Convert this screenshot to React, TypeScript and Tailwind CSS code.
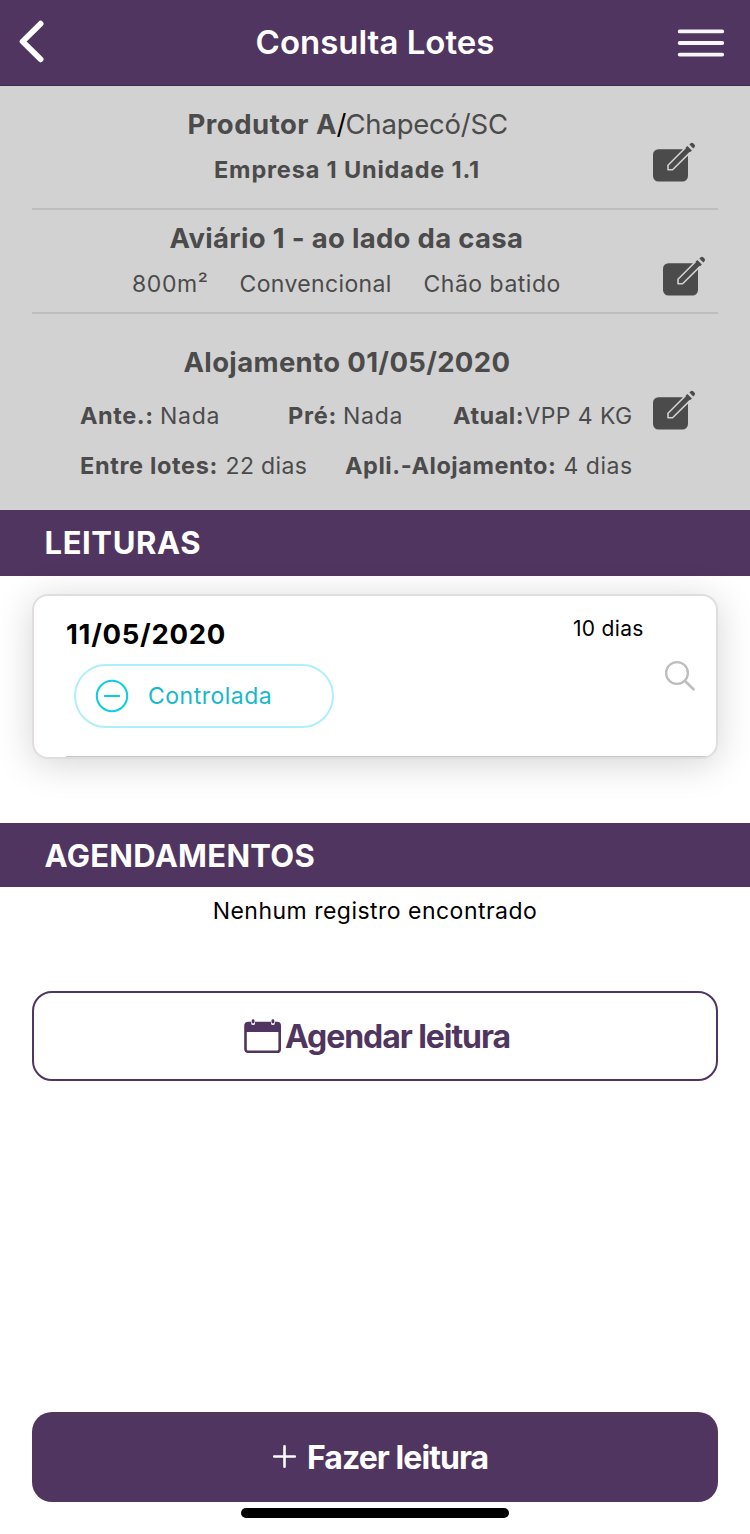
import type { ReactNode } from 'react';

function EditIcon() {
  return (
    <svg className="block h-[40px] w-[44px] shrink-0" viewBox="0 0 44 40">
      <rect x="0" y="7.2" width="35" height="32.4" rx="5.5" fill="#4b4b4b" />
      <path
        d="M15 27.7V23.2L34.2 4L38.9 8.6L19.6 27.7Z"
        fill="#4b4b4b"
        stroke="#d2d2d2"
        strokeWidth="1.6"
        strokeLinejoin="round"
      />
      <path d="M34.4 3.9L38.9 8.4L37 10.3L32.5 5.8Z" fill="#4b4b4b" />
      <path d="M36.4 2.6L37.7 1.3Q39 .1 40.2 1.3L41.6 2.7Q42.7 3.9 41.6 5.1L40.3 6.4Z" fill="#4b4b4b" />
    </svg>
  );
}

function SectionTitle({ children }: { children: ReactNode }) {
  return <h3 className="text-[27.5px] font-bold leading-[34px]">{children}</h3>;
}

function Header() {
  return (
    <header className="grid h-[86px] grid-cols-[80px_1fr_80px] items-start border-b border-[#3f2a4c] bg-[#4f355f] text-white">
      <svg className="mt-[17px] ml-[16px] h-[50px] w-[32px]" viewBox="0 0 32 50" fill="none">
        <path
          d="M24.6 6.7L6.6 24.5L24.6 42.3"
          stroke="#fff"
          strokeWidth="5.8"
          strokeLinecap="round"
          strokeLinejoin="round"
        />
      </svg>
      <h1 className="mt-[22px] text-center text-[33px] font-semibold leading-[40px]">Consulta Lotes</h1>
      <svg className="mt-[26px] ml-[7px] h-[34px] w-[48px]" viewBox="0 0 48 34" fill="none">
        <path d="M2.7 5.4H45.2M2.7 17H45.2M2.7 28.6H45.2" stroke="#f8f6f9" strokeWidth="3.9" strokeLinecap="round" />
      </svg>
    </header>
  );
}

function Details() {
  return (
    <section className="h-[424px] bg-[#d2d2d2] px-[32px] text-[#4b4b4b]">
      <div className="flex h-[124px] border-b-2 border-[#bebebe]">
        <div className="w-[621px] pt-[21px]">
          <div className="flex pl-[155.5px] text-[27.5px] leading-[34px] whitespace-nowrap">
            <span className="w-[149px] font-bold tracking-[0.5px]">Produtor A</span>
            <span className="w-[9px] text-black">/</span>
            <span className="tracking-[-0.22px]">Chapecó/SC</span>
          </div>
          <p className="mt-[13px] pl-[182px] text-[23.5px] font-bold leading-[32px] tracking-[0.83px]">
            Empresa 1 Unidade 1.1
          </p>
        </div>
        <div className="pt-[56px]">
          <EditIcon />
        </div>
      </div>

      <div className="flex h-[104px] border-b-2 border-[#bebebe]">
        <div className="w-[631px] pt-[11px]">
          <div className="pl-[137.5px] tracking-[0.3px]">
            <SectionTitle>Aviário 1 - ao lado da casa</SectionTitle>
          </div>
          <div className="mt-[13px] flex pl-[100px] text-[23px] leading-[32px]">
            <span className="w-[107.5px] tracking-[0.6px]">800m²</span>
            <span className="w-[184px] tracking-[0.36px]">Convencional</span>
            <span className="tracking-[0.5px]">Chão batido</span>
          </div>
        </div>
        <div className="pt-[46px]">
          <EditIcon />
        </div>
      </div>

      <div className="flex h-[196px]">
        <div className="w-[621px] pt-[31px]">
          <div className="pl-[151.5px] tracking-[0.34px]">
            <SectionTitle>Alojamento 01/05/2020</SectionTitle>
          </div>
          <div className="mt-[21px] flex pl-[48px] text-[23px] leading-[32px]">
            <b className="w-[80px] text-[23.5px] tracking-[0.55px]">Ante.:</b>
            <span className="w-[128px] tracking-[0.75px]">Nada</span>
            <b className="w-[55px] text-[23.5px] tracking-[0.8px]">Pré:</b>
            <span className="w-[110px] tracking-[0.75px]">Nada</span>
            <b className="w-[71.5px] text-[23.5px] tracking-[0.5px]">Atual:</b>
            <span className="whitespace-nowrap tracking-[0.4px]">VPP 4 KG</span>
          </div>
          <div className="mt-[18px] flex pl-[48px] text-[23px] leading-[32px] whitespace-nowrap">
            <b className="w-[145.5px] text-[23.5px] tracking-[0.65px]">Entre lotes:</b>
            <span className="w-[119.5px] tracking-[0.36px]">22 dias</span>
            <b className="w-[218.5px] text-[23.5px] tracking-[0.54px]">Apli.-Alojamento:</b>
            <span className="tracking-[0.5px]">4 dias</span>
          </div>
        </div>
        <div className="pt-[76px]">
          <EditIcon />
        </div>
      </div>
    </section>
  );
}

function ReadingCard() {
  return (
    <article className="mx-[32px] mt-[18px] h-[165px] overflow-hidden rounded-[16px] border-2 border-[#e1dddd] bg-white shadow-[0_5px_36px_rgba(0,0,0,0.17)]">
      <div className="flex h-[160px] pl-[32px]">
        <div className="w-[507px] pt-[21px]">
          <p className="text-[27.5px] font-bold leading-[34px] tracking-[0.72px]">11/05/2020</p>
          <div className="mt-[13px] ml-[8px] flex h-[64px] w-[260px] items-center rounded-full border-2 border-[#aff0f8] pl-[19px]">
            <svg className="h-[34px] w-[34px]" viewBox="0 0 34 34" fill="none" stroke="#10cde6" strokeWidth="2.1">
              <circle cx="17" cy="17" r="15.2" />
              <path d="M9.8 17H24.2" strokeLinecap="round" />
            </svg>
            <span className="ml-[19px] text-[23px] tracking-[0.5px] text-[#17b8cc]">Controlada</span>
          </div>
        </div>
        <div className="pt-[17px]">
          <p className="text-[21px] leading-[32px] tracking-[0.3px] text-black">10 dias</p>
          <svg className="mt-[14px] ml-[90px] h-[34px] w-[34px]" viewBox="0 0 34 34" fill="none" stroke="#bdbdbd">
            <circle cx="14" cy="14" r="10.9" strokeWidth="2.3" />
            <path d="M21.8 21.8L30.6 30.4" strokeWidth="2.7" strokeLinecap="round" />
          </svg>
        </div>
      </div>
      <div className="ml-[32px] h-px bg-[#c6c6ca]" />
    </article>
  );
}

function CalendarIcon() {
  return (
    <svg className="block h-[36px] w-[38px]" viewBox="0 0 38 36" fill="none">
      <rect x="1.5" y="5" width="34.2" height="28.8" rx="2.6" stroke="#4f355f" strokeWidth="2.6" />
      <path d="M1.5 5H35.5V14H1.5Z" fill="#4f355f" />
      <path d="M9.1 2.6V5.2M28.9 2.6V5.2" stroke="#fff" strokeWidth="3.8" strokeLinecap="round" />
      <path d="M9.1 2.6V4M28.9 2.6V4" stroke="#4f355f" strokeWidth="2.8" strokeLinecap="round" />
    </svg>
  );
}

export default function App() {
  return (
    <main className="flex h-[1534px] w-[750px] flex-col overflow-hidden bg-white font-['Inter',sans-serif] text-black">
      <Header />
      <Details />
      <h2 className="h-[66px] shrink-0 bg-[#4f355f] pl-[44.5px] text-[31px] font-bold leading-[66px] tracking-[0.6px] text-white">
        LEITURAS
      </h2>
      <ReadingCard />
      <h2 className="mt-[64px] h-[64px] shrink-0 bg-[#4f355f] pl-[44.5px] text-[31px] font-bold leading-[66px] tracking-[0.3px] text-white">
        AGENDAMENTOS
      </h2>
      <p className="mt-[8px] text-center text-[23px] leading-[32px] tracking-[0.48px]">Nenhum registro encontrado</p>
      <button className="mx-[32px] mt-[64px] flex h-[90px] shrink-0 items-center rounded-[20px] border-2 border-[#4f355f] pl-[210px] text-[32px] font-bold tracking-[-1.06px] text-[#4f355f]">
        <CalendarIcon />
        <span className="ml-[3px] pt-[2px]">Agendar leitura</span>
      </button>
      <button className="mx-[32px] mt-auto flex h-[90px] shrink-0 items-center rounded-[20px] bg-[#4f355f] pl-[239px] text-[32px] font-bold tracking-[-0.94px] text-white">
        <svg className="h-[26px] w-[26px]" viewBox="0 0 26 26" fill="none">
          <path d="M13.5 2.2V22.8M3.2 12.5H23.8" stroke="#fff" strokeWidth="2.6" strokeLinecap="round" />
        </svg>
        <span className="ml-[10px] pt-[2px]">Fazer leitura</span>
      </button>
      <div className="mx-auto mt-[6px] mb-[16px] h-[10px] w-[268px] shrink-0 rounded-full bg-black" />
    </main>
  );
}
